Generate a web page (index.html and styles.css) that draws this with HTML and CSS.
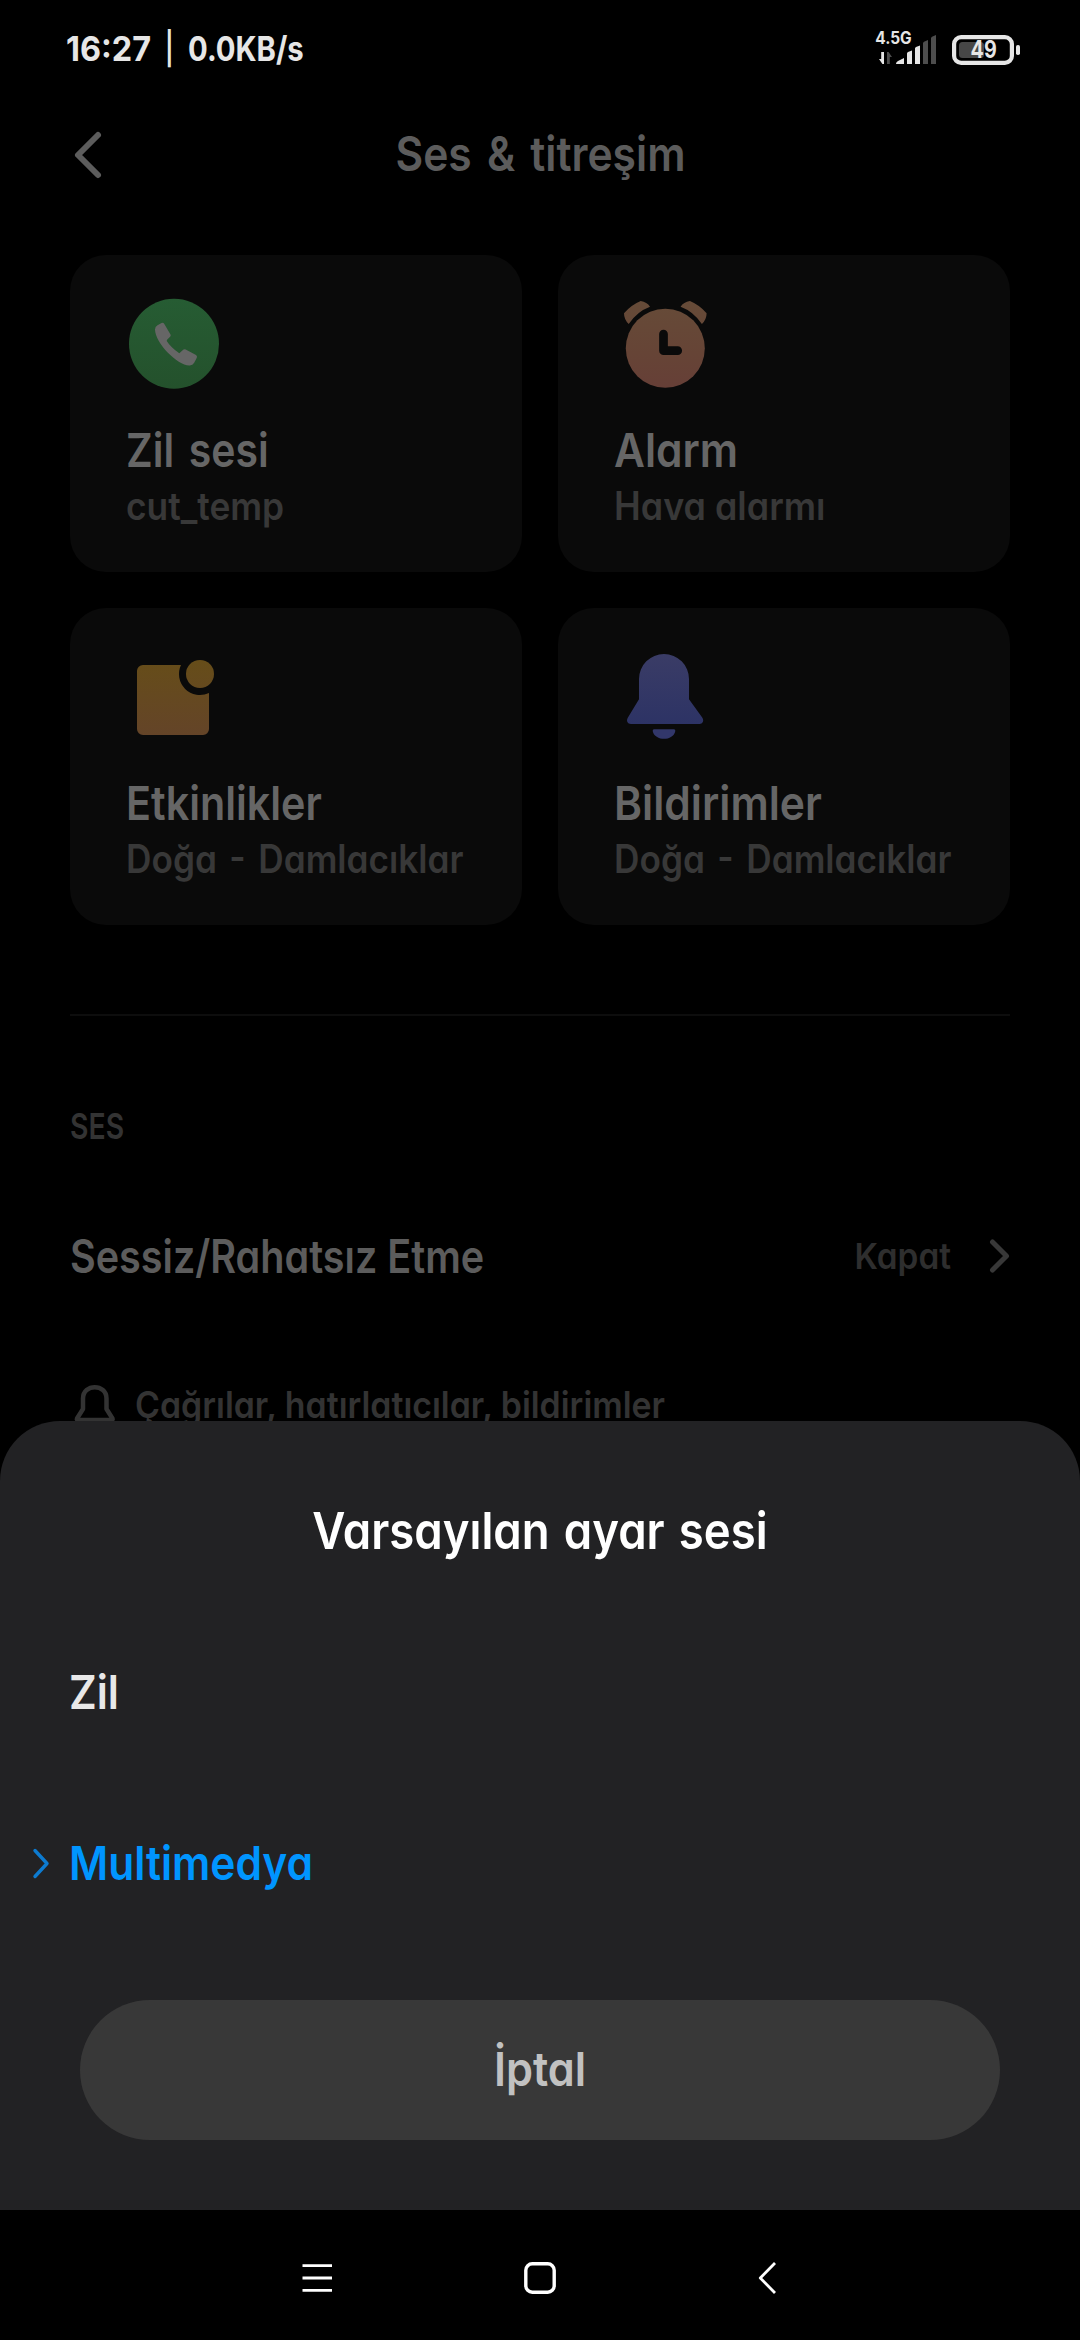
FILE: index.html
```html
<!DOCTYPE html>
<html lang="tr">
<head>
<meta charset="utf-8">
<title>Ses &amp; titreşim</title>
<link rel="stylesheet" href="styles.css">
</head>
<body>
<div class="screen">
  <header class="status">
    <div class="status-left">
      <span class="txt clock">16:27</span>
      <span class="txt sep">|</span>
      <span class="txt speed">0.0KB/s</span>
    </div>
    <div class="status-right">
      <svg class="signal" width="62" height="32" viewBox="0 0 62 32">
        <text class="net" transform="translate(.3 10.2) scale(.908 1)">4.5G</text>
        <path class="lit" d="M9 18v12H7.400L4 25h2.200V18zM21 30q0-2 2-3l6-3v6zM32 30V19.600q0-1 1-1.500l4-1.600V30zM40 30V14.600q0-1 1-1.600l4-1.600V30z"/>
        <path class="unlit" d="M12 30V18h1.600l3.400 5h-2.200V30zM48 30V9.400q0-1.200 1-1.700l4-1.600V30zM56 30V4.400q0-1.200 1-1.700l4-1.600V30z"/>
      </svg>
      <svg class="battery" width="68" height="30" viewBox="0 0 68 30">
        <rect class="charge" x="7" y="7" width="25" height="16" rx="3.500"/>
        <rect class="shell" x="2.100" y="2.100" width="57.800" height="25.800" rx="7"/>
        <rect class="lit" x="64" y="10" width="4" height="10" rx="1.800"/>
        <text class="level" transform="translate(18.600 23.200) scale(.82 1)">49</text>
      </svg>
    </div>
  </header>

  <main class="page">
    <div class="topbar">
      <svg class="back" width="30" height="50" viewBox="0 0 30 50"><path d="M25 5 5 25l20 20"/></svg>
      <h1 class="txt title">Ses &amp; titreşim</h1>
    </div>

    <section class="cards">
      <article class="card">
        <svg class="card-icon" width="100" height="104" viewBox="0 0 100 104">
          <defs><linearGradient id="g1" x1="0" y1="0" x2="0" y2="1"><stop offset="0" stop-color="#265c33"/><stop offset="1" stop-color="#24512c"/></linearGradient></defs>
          <circle cx="48" cy="52.800" r="45" fill="url(#g1)"/>
          <path fill="#666" d="M29 38.500q0-2.800 2.500-4.300l4-2.200q1.800-.7 2.800 1l6.200 10.600q.6 1-.2 1.800l-3 3q-.8.800-.4 1.800Q44.500 56 53.300 62.300l4.200-3.700q1-.7 2.200-.1L70 64q1.500 1 .8 2.800l-2.600 5q-1.500 2.600-4.500 2.600C52 75 29 52 29 38.500z"/>
        </svg>
        <h2 class="txt name k-zil">Zil sesi</h2>
        <p class="txt value k-cut">cut_temp</p>
      </article>
      <article class="card">
        <svg class="card-icon" width="100" height="104" viewBox="0 0 100 104">
          <defs><linearGradient id="g2" gradientUnits="userSpaceOnUse" x1="0" y1="10" x2="0" y2="97"><stop offset="0" stop-color="#664b38"/><stop offset=".6" stop-color="#664436"/><stop offset="1" stop-color="#663f37"/></linearGradient></defs>
          <g fill="url(#g2)">
            <circle cx="51.300" cy="57.300" r="39.500"/>
            <path d="M10 22.300Q17 14 26.700 10 33 11 36 15.700 23 20.500 14.700 33 10 28.500 10 22.300zM92.600 22.300Q85.600 14 75.900 10 69.600 11 66.600 15.700 79.600 20.500 87.900 33 92.600 28.500 92.600 22.300z"/>
          </g>
          <path class="hands" d="M49.500 43v16.700H63.700"/>
        </svg>
        <h2 class="txt name k-alarm">Alarm</h2>
        <p class="txt value k-hava">Hava alarmı</p>
      </article>
      <article class="card">
        <svg class="card-icon" width="100" height="104" viewBox="0 0 100 104">
          <defs><linearGradient id="g3" gradientUnits="userSpaceOnUse" x1="0" y1="16" x2="0" y2="91"><stop offset="0" stop-color="#664d19"/><stop offset="1" stop-color="#644428"/></linearGradient></defs>
          <g fill="url(#g3)">
            <path d="M17 21H55A21 21 0 0 0 83 49V85a6 6 0 0 1-6 6H17a6 6 0 0 1-6-6V27a6 6 0 0 1 6-6z"/>
            <circle cx="74" cy="30" r="14"/>
          </g>
        </svg>
        <h2 class="txt name k-etk">Etkinlikler</h2>
        <p class="txt value k-doga">Doğa - Damlacıklar</p>
      </article>
      <article class="card">
        <svg class="card-icon" width="100" height="104" viewBox="0 0 100 104">
          <defs><linearGradient id="g4" gradientUnits="userSpaceOnUse" x1="0" y1="10" x2="0" y2="80"><stop offset="0" stop-color="#3a3c66"/><stop offset="1" stop-color="#2d3365"/></linearGradient></defs>
          <path fill="url(#g4)" d="M25 35a25 25 0 0 1 50 0V55.300L88.200 73.500C90.500 77 88.500 80 85.500 80H17C13.500 80 12 77 13.800 73.800L25 55.300z"/>
          <path fill="#32376a" d="M40 85.300H60q1.500 0 1.300 1.600C60.500 92 55 94.800 50 94.800S39.500 92 38.700 86.900Q38.500 85.300 40 85.300z"/>
        </svg>
        <h2 class="txt name k-bil">Bildirimler</h2>
        <p class="txt value k-doga">Doğa - Damlacıklar</p>
      </article>
    </section>

    <hr class="divider">

    <section class="sound">
      <h3 class="txt section-label">SES</h3>
      <div class="row">
        <span class="txt row-name">Sessiz/Rahatsız Etme</span>
        <span class="txt row-value">Kapat</span>
        <svg class="row-arrow" width="24" height="36" viewBox="0 0 24 36"><path d="M6.500 4 20.500 18l-14 14"/></svg>
      </div>
      <div class="hint">
        <svg class="hint-bell" width="42" height="44" viewBox="0 0 42 44"><path d="M9 16.500C9 1.500 32.500 1.500 32.500 16.500V27l6 9.500q.6 1.500-1 1.500H4q-1.600 0-1-1.500L9 27z"/></svg>
        <span class="txt hint-text">Çağrılar, hatırlatıcılar, bildirimler</span>
      </div>
    </section>
  </main>

  <section class="sheet">
    <h2 class="txt sheet-title">Varsayılan ayar sesi</h2>
    <div class="option"><span class="mark"></span><span class="txt">Zil</span></div>
    <div class="option selected">
      <span class="mark"><svg width="20" height="34" viewBox="0 0 20 34"><path d="M3 4.500 15 17.500 3 30.500"/></svg></span>
      <span class="txt">Multimedya</span>
    </div>
    <button class="cancel"><span class="txt">İptal</span></button>
  </section>

  <nav class="navbar">
    <svg width="32" height="36" viewBox="0 0 32 36"><path d="M1.500 5.700H31M1.500 18H31M1.500 30.300H31"/></svg>
    <svg width="32" height="36" viewBox="0 0 32 36"><rect x="1.800" y="3.800" width="28.400" height="28.400" rx="6.500"/></svg>
    <svg width="32" height="36" viewBox="0 0 32 36"><path d="M28 3 13.300 18 28 33"/></svg>
  </nav>
</div>
</body>
</html>
```
FILE: styles.css
```css
* { box-sizing: border-box; margin: 0; padding: 0; }

body {
  background: #000;
  font-family: Inter, "Noto Sans", sans-serif;
  font-weight: 600;
  font-feature-settings: "cv11";
}

svg { display: block; flex: none; overflow: visible; }

.screen {
  position: relative;
  display: flex;
  flex-direction: column;
  width: 1080px;
  height: 2340px;
  overflow: hidden;
  background: #000;
}

/* Labels are slightly condensed; each one sets its own factor. */
.txt {
  display: inline-block;
  white-space: nowrap;
  font-weight: inherit;
  transform: scaleX(var(--k, .904));
  transform-origin: left center;
}

/* Status bar */
.status {
  display: flex;
  justify-content: space-between;
  height: 97px;
  padding: 0 60px 0 66px;
  color: #e6e6e6;
  font-size: 34px;
  font-weight: 700;
  line-height: 97px;
}
.status-left { display: flex; }
.clock { --k: .953; width: 99px; }
.sep { --k: .752; width: 23px; font-size: 32px; font-weight: 600; }
.speed { --k: .861; }
.status-right { display: flex; align-items: center; gap: 15px; padding-top: 3px; }
.lit { fill: #e6e6e6; }
.unlit { fill: #4d4d4d; }
.net { fill: #e6e6e6; font-size: 17px; }
.level { fill: #e6e6e6; font-size: 24px; }
.shell { fill: none; stroke: #e6e6e6; stroke-width: 4.2; }
.charge { fill: #474747; }

/* Settings page */
.page { height: 1324px; padding: 0 70px; }

.topbar {
  display: grid;
  grid-template-columns: 30px 1fr 30px;
  align-items: center;
  height: 113px;
  margin-bottom: 45px;
}
.back { margin-left: 3px; margin-top: 3px; }
.back path { fill: none; stroke: #5c5c5c; stroke-width: 6; stroke-linecap: round; stroke-linejoin: round; }
.title {
  --k: .887;
  justify-self: center;
  transform-origin: center;
  color: #5c5c5c;
  font-size: 48px;
  line-height: 60px;
  word-spacing: 5px;
}

.cards { display: grid; grid-template-columns: 1fr 1fr; gap: 36px; }
.card {
  display: flex;
  flex-direction: column;
  height: 317px;
  padding: 36px 0 0 56px;
  border-radius: 36px;
  background: #0a0a0a;
}
.card-icon { margin-bottom: 25px; }
.hands { fill: none; stroke: #0a0a0a; stroke-width: 8.7; stroke-linecap: round; stroke-linejoin: round; }
.name { color: #666; font-size: 47px; line-height: 60px; }
.value { color: #383838; font-size: 39px; line-height: 52px; }
.k-zil { --k: .871; word-spacing: 5px; }
.k-cut { --k: .906; }
.k-alarm { --k: .904; }
.k-hava { --k: .92; }
.k-etk { --k: .878; }
.k-bil { --k: .905; }
.k-doga { --k: .903; word-spacing: 4px; }

.divider { height: 2px; margin: 89px 0 90px; border: 0; background: #0d0d0d; }

.section-label { --k: .788; color: #333; font-size: 36px; line-height: 40px; }
.sound { display: flex; flex-direction: column; }

.row { display: flex; align-items: center; height: 60px; margin-top: 80px; }
.row-name { --k: .86; flex: 1; color: #5c5c5c; font-size: 46px; }
.row-value {
  --k: .927;
  margin-right: 35px;
  transform-origin: right center;
  color: #2e2e2e;
  font-size: 36px;
}
.row-arrow path { fill: none; stroke: #383838; stroke-width: 5; stroke-linecap: round; stroke-linejoin: round; }

.hint { display: flex; align-items: center; height: 60px; margin-top: 88px; }
.hint-bell { margin: 0 19px 0 4px; }
.hint-bell path { fill: none; stroke: #333; stroke-width: 4.5; stroke-linejoin: round; }
.hint-text { --k: .915; color: #333; font-size: 37px; }

/* Bottom sheet over the page */
.sheet {
  position: absolute;
  top: 1421px;
  left: 0;
  display: flex;
  flex-direction: column;
  width: 1080px;
  height: 789px;
  border-radius: 60px 60px 0 0;
  background: #222224;
}
.sheet-title {
  --k: .893;
  align-self: center;
  margin: 80px 0 45px;
  transform-origin: center;
  color: #fff;
  font-size: 51px;
  line-height: 60px;
  word-spacing: 3px;
}
.option {
  display: flex;
  align-items: center;
  height: 171px;
  color: #e8e8e8;
  font-size: 47px;
}
.mark { width: 69px; padding-left: 32px; }
.mark path { fill: none; stroke: #0d7bd0; stroke-width: 3.4; stroke-linecap: round; stroke-linejoin: round; }
.selected { color: #0095ff; }
.cancel {
  align-self: center;
  width: 920px;
  height: 140px;
  margin-top: 52px;
  padding-bottom: 4px;
  border: 0;
  border-radius: 70px;
  background: #383838;
  color: #c1c1c1;
  font: inherit;
  font-size: 47px;
}
.cancel .txt { --k: .921; transform-origin: center; }

/* System navigation */
.navbar {
  display: flex;
  align-items: center;
  justify-content: center;
  gap: 191px;
  height: 130px;
  margin-top: auto;
  padding-top: 6px;
}
.navbar path, .navbar rect { fill: none; stroke: #fff; stroke-width: 2.8; stroke-linejoin: round; }
.navbar rect { stroke-width: 3.4; }
```
